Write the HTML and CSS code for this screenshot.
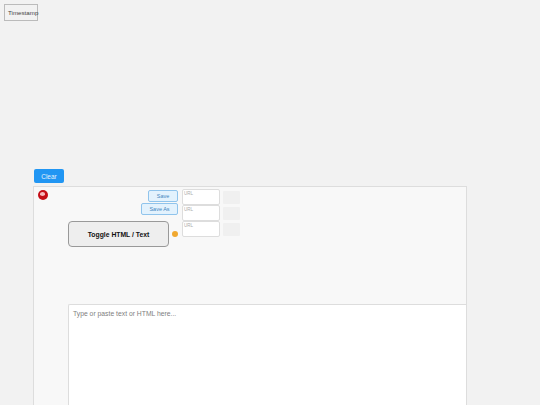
FILE: index.html
```html
<!DOCTYPE html>
<html lang="en">
<head>
    <meta charset="UTF-8">
    <meta name="viewport" content="width=device-width, initial-scale=1.0">
    <title>Timestamp</title>
    <link rel="stylesheet" href="styles.css">
</head>
<body>
    <button class="timestamp-button">Timestamp</button>

    <div class="main">
        <button class="clear-button">Clear</button>

        <div class="panel">
            <span class="record-button"><span class="record-glint"></span></span>

            <div class="tools">
                <div class="actions">
                    <button class="save-button">Save</button>
                    <button class="save-button save-as">Save As</button>
                    <div class="toggle-row">
                        <button class="toggle-button">Toggle HTML / Text</button>
                        <span class="status-dot"></span>
                    </div>
                </div>
                <div class="url-list">
                    <div class="url-row">
                        <div class="url-box">URL</div>
                        <div class="url-thumb"></div>
                    </div>
                    <div class="url-row">
                        <div class="url-box">URL</div>
                        <div class="url-thumb"></div>
                    </div>
                    <div class="url-row">
                        <div class="url-box">URL</div>
                        <div class="url-thumb"></div>
                    </div>
                </div>
            </div>

            <div class="editor">Type or paste text or HTML here...</div>
        </div>
    </div>
</body>
</html>
```

FILE: styles.css
```css
html, body {
    height: 100%;
}
body {
    font-family: "Liberation Sans", Arial, sans-serif;
    background-color: #f2f2f2;
    margin: 0;
    padding: 4px 0 0 4px;
    box-sizing: border-box;
    overflow: hidden;
}
button {
    font-family: inherit;
    padding: 0;
    cursor: pointer;
}
.timestamp-button {
    display: block;
    width: 34px;
    height: 17px;
    font-size: 6.2px;
    color: #444;
    background-color: #f2f2f2;
    border: 1px solid #bbb;
    white-space: nowrap;
    text-align: left;
    padding-left: 3px;
}
.main {
    margin: 148px 0 0 29px;
    width: 434px;
}
.clear-button {
    display: block;
    width: 30px;
    height: 14px;
    font-size: 6.5px;
    color: #e3f2fd;
    background-color: #2196f3;
    border: none;
    border-radius: 2px;
    margin-left: 1px;
}
.panel {
    position: relative;
    margin-top: 3px;
    height: 300px;
    background-color: #f8f8f8;
    border: 1px solid #ddd;
    padding: 2px 0 0 34px;
}
.record-button {
    position: absolute;
    left: 3.5px;
    top: 3px;
    width: 10px;
    height: 10px;
    border-radius: 50%;
    background-color: #c40d16;
}
.record-glint {
    position: absolute;
    left: 2.5px;
    top: 2px;
    width: 5px;
    height: 3.5px;
    border-radius: 50%;
    background-color: #f6b9bc;
}
.tools {
    display: flex;
    height: 115px;
}
.actions {
    width: 110px;
    display: flex;
    flex-direction: column;
    align-items: flex-end;
}
.save-button {
    width: 30px;
    height: 12px;
    margin-top: 1px;
    font-size: 5.5px;
    color: #3f85bd;
    background-color: #e3f2fd;
    border: 1px solid #90c4ec;
    border-radius: 2px;
}
.save-as {
    width: 37px;
    margin-top: 1px;
}
.toggle-row {
    display: flex;
    align-items: center;
    gap: 3px;
    margin-top: 6px;
}
.toggle-button {
    width: 101px;
    height: 26px;
    font-size: 6.8px;
    font-weight: bold;
    color: #111;
    background-color: #eee;
    border: 1px solid #999;
    border-radius: 4px;
}
.status-dot {
    width: 6px;
    height: 6px;
    border-radius: 50%;
    background-color: #f0a830;
}
.url-list {
    margin-left: 4px;
    display: flex;
    flex-direction: column;
}
.url-row {
    display: flex;
    align-items: center;
    gap: 3px;
}
.url-box {
    width: 38px;
    height: 16px;
    box-sizing: border-box;
    padding: 1px;
    font-size: 4.5px;
    line-height: 5px;
    color: #aaa;
    background-color: #fff;
    border: 1px solid #ddd;
    border-radius: 2px;
}
.url-thumb {
    width: 17px;
    height: 13px;
    background-color: #f0f0f0;
    border-radius: 1px;
}
.editor {
    height: 200px;
    padding: 5px 4px;
    font-size: 6.8px;
    color: #808080;
    background-color: #fff;
    border-top: 1px solid #ddd;
    border-left: 1px solid #ddd;
    border-top-left-radius: 2px;
}
```
